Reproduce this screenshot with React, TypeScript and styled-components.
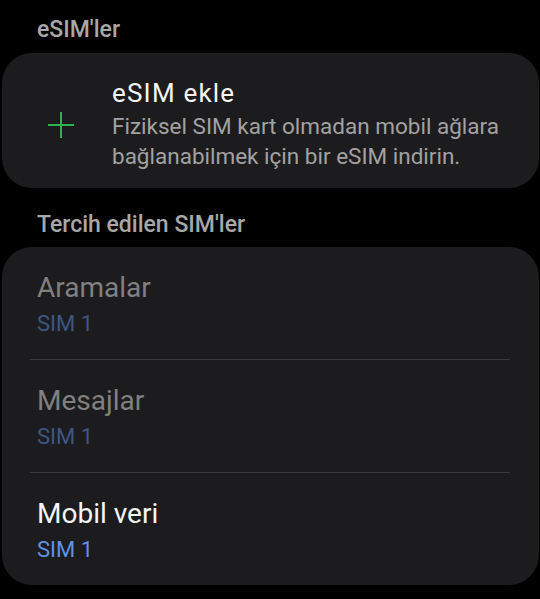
import React from "react";
import styled, { createGlobalStyle } from "styled-components";

const GlobalStyle = createGlobalStyle`
  html, body {
    margin: 0;
    padding: 0;
    background: #000000;
  }
  body {
    font-family: Roboto, "Noto Sans", "Liberation Sans", sans-serif;
    -webkit-font-smoothing: antialiased;
  }
`;

const Page = styled.div`
  width: 540px;
  min-height: 599px;
  box-sizing: border-box;
  padding: 16px 1px 0 2px;
  display: flex;
  flex-direction: column;
`;

const SectionHeader = styled.div<{ $top?: number }>`
  padding: ${(p) => p.$top ?? 0}px 0 0 35px;
  font-size: 23px;
  line-height: 28px;
  font-weight: 500;
  color: #a8a8a8;
`;

const Card = styled.div<{ $mt: number }>`
  margin-top: ${(p) => p.$mt}px;
  background: #1c1c1e;
  border-radius: 30px;
`;

const AddRow = styled.div`
  display: flex;
  align-items: center;
  padding: 25px 20px 17px 45px;
`;

const PlusIcon = styled.svg`
  flex: none;
  width: 28px;
  height: 28px;
  margin-right: 37px;
`;

const AddText = styled.div`
  display: flex;
  flex-direction: column;
`;

const AddTitle = styled.div`
  font-size: 26px;
  line-height: 30px;
  letter-spacing: 1.2px;
  color: #f4f4f4;
`;

const AddDesc = styled.div`
  margin-top: 3px;
  font-size: 22.5px;
  line-height: 30px;
  color: #a2a2a2;
  white-space: nowrap;
`;

const Row = styled.div`
  height: 112px;
  box-sizing: border-box;
  padding: 23px 28px 0 35px;
  display: flex;
  flex-direction: column;
`;

const Divider = styled.div`
  height: 1px;
  margin: 0 29px 0 28px;
  background: #3a3a3c;
`;

const RowTitle = styled.div<{ $disabled?: boolean }>`
  font-size: 28px;
  line-height: 36px;
  color: ${(p) => (p.$disabled ? "#808081" : "#f4f4f4")};
`;

const RowValue = styled.div<{ $disabled?: boolean }>`
  margin-top: 3px;
  font-size: 22px;
  line-height: 30px;
  color: ${(p) => (p.$disabled ? "#3c5784" : "#5e93e8")};
`;

const rows = [
  { title: "Aramalar", value: "SIM 1", disabled: true },
  { title: "Mesajlar", value: "SIM 1", disabled: true },
  { title: "Mobil veri", value: "SIM 1", disabled: false },
];

export default function App() {
  return (
    <>
      <GlobalStyle />
      <Page>
        <SectionHeader>eSIM'ler</SectionHeader>
        <Card $mt={9}>
          <AddRow>
            <PlusIcon viewBox="0 0 28 28">
              <path d="M14 1v26M1 14h26" stroke="#2fb14b" strokeWidth="2" fill="none" />
            </PlusIcon>
            <AddText>
              <AddTitle>eSIM ekle</AddTitle>
              <AddDesc>
                Fiziksel SIM kart olmadan mobil ağlara
                <br />
                bağlanabilmek için bir eSIM indirin.
              </AddDesc>
            </AddText>
          </AddRow>
        </Card>
        <SectionHeader $top={23}>Tercih edilen SIM'ler</SectionHeader>
        <Card $mt={8}>
          {rows.map((r, i) => (
            <React.Fragment key={r.title}>
              {i > 0 && <Divider />}
              <Row>
                <RowTitle $disabled={r.disabled}>{r.title}</RowTitle>
                <RowValue $disabled={r.disabled}>{r.value}</RowValue>
              </Row>
            </React.Fragment>
          ))}
        </Card>
      </Page>
    </>
  );
}
